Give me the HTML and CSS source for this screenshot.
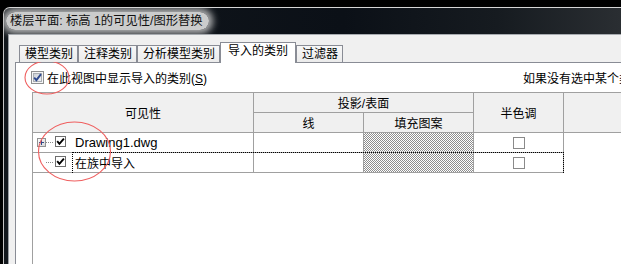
FILE: index.html
```html
<!DOCTYPE html>
<html lang="zh">
<head>
<meta charset="utf-8">
<title>可见性/图形替换</title>
<link rel="stylesheet" href="styles.css">
</head>
<body>
<div class="window">
  <div class="titlebar"><span class="title">楼层平面: 标高 1的可见性/图形替换</span></div>
  <div class="client">
    <div class="tabs">
      <div class="tab">模型类别</div>
      <div class="tab">注释类别</div>
      <div class="tab">分析模型类别</div>
      <div class="tab active">导入的类别</div>
      <div class="tab">过滤器</div>
    </div>
    <div class="page">
      <div class="checkrow">
        <svg class="cb13" width="13" height="13" viewBox="0 0 13 13">
          <defs><linearGradient id="cbg" x1="0" y1="0" x2="1" y2="1"><stop offset="0" stop-color="#cbcfd5"/><stop offset="1" stop-color="#f1f3f5"/></linearGradient></defs>
          <rect x="0.5" y="0.5" width="12" height="12" fill="#f5f5f5" stroke="#8e8f8f"/>
          <rect x="2.5" y="2.5" width="8" height="8" fill="url(#cbg)" stroke="#a9adb3"/>
          <path d="M3.2 6.6 L5.4 9.2 L10 3.2" fill="none" stroke="#2f4a8f" stroke-width="1.9"/>
        </svg>
        <span class="label">在此视图中显示导入的类别(<u>S</u>)</span>
        <span class="hint">如果没有选中某个类别，则该类别将不可见。</span>
      </div>
      <div class="grid">
        <div class="h vis">可见性</div>
        <div class="h proj">投影/表面</div>
        <div class="h half">半色调</div>
        <div class="h extra"></div>
        <div class="h">线</div>
        <div class="h">填充图案</div>

        <div class="c name">
          <svg class="exp" width="9" height="9" viewBox="0 0 9 9">
            <defs><linearGradient id="eg" x1="0" y1="0" x2="1" y2="1"><stop offset="0" stop-color="#ffffff"/><stop offset="1" stop-color="#d4d4d4"/></linearGradient></defs>
            <rect x="0.5" y="0.5" width="8" height="8" fill="url(#eg)" stroke="#919191"/>
            <path d="M2 4.5 H7 M4.5 2 V7" stroke="#2b4a8a" stroke-width="1"/>
          </svg>
          <span class="tree"></span>
          <svg class="cb11" width="11" height="11" viewBox="0 0 11 11">
            <rect x="0.5" y="0.5" width="10" height="10" fill="#fff" stroke="#6e6e6e"/>
            <path d="M2.2 5.2 L4.4 7.8 L8.9 2.6" fill="none" stroke="#000" stroke-width="1.9"/>
          </svg>
          <span class="text latin">Drawing1.dwg</span>
        </div>
        <div class="c"></div>
        <div class="c pat"></div>
        <div class="c chk"><span class="box"></span></div>
        <div class="c blank"></div>

        <div class="c name">
          <span class="exp-space"></span>
          <span class="tree"></span>
          <svg class="cb11" width="11" height="11" viewBox="0 0 11 11">
            <rect x="0.5" y="0.5" width="10" height="10" fill="#fff" stroke="#6e6e6e"/>
            <path d="M2.2 5.2 L4.4 7.8 L8.9 2.6" fill="none" stroke="#000" stroke-width="1.9"/>
          </svg>
          <span class="text">在族中导入</span>
        </div>
        <div class="c"></div>
        <div class="c pat"></div>
        <div class="c chk"><span class="box"></span></div>
        <div class="c blank"></div>

        <div class="focus"></div>
      </div>
    </div>
  </div>
</div>
<svg class="marks" width="621" height="264" viewBox="0 0 621 264">
  <ellipse cx="47" cy="77.5" rx="22" ry="16.5" fill="none" stroke="#ef5f5f" stroke-width="1.1"/>
  <ellipse cx="74.5" cy="151.5" rx="36" ry="29.5" fill="none" stroke="#ef5f5f" stroke-width="1.1"/>
</svg>
</body>
</html>
```

FILE: styles.css
```css
* { box-sizing: border-box; }
html, body { margin: 0; padding: 0; }
body {
  width: 621px;
  height: 264px;
  overflow: hidden;
  position: relative;
  background: #000;
  font: 12px "Liberation Sans", "Noto Sans CJK SC", sans-serif;
  color: #000;
}
.window {
  margin: 7px 0 0 3px;
  height: 257px;
  border-top: 1px solid #d6d6d6;
  border-left: 1px solid #c4c4c4;
  border-top-left-radius: 7px;
  background: linear-gradient(to right, #12171c, #0b1017 55%, #161b20 80%, #2a2e32);
  display: flex;
  flex-direction: column;
  overflow: hidden;
}
.titlebar {
  height: 26px;
  flex: none;
  display: flex;
  align-items: center;
  padding-left: 6px;
}
.title {
  margin-left: -4px;
  padding: 2px 6px 2px 4px;
  line-height: 14px;
  font-size: 12.3px;
  white-space: nowrap;
  color: #111;
  background: rgba(214,214,214,0.95);
  border-radius: 10px;
  box-shadow: 0 0 7px 4px rgba(205,205,205,0.85);
}
.client {
  flex: 1;
  margin-left: 4px;
  border-top: 1px solid #a7abb0;
  border-left: 1px solid #9a9ea3;
  background: #f0f0f0;
  padding: 7px 0 0 6px;
  overflow: hidden;
  position: relative;
}
.tabs {
  display: flex;
  align-items: flex-end;
  margin-left: 4px;
  position: relative;
  z-index: 1;
}
.tab {
  height: 17px;
  padding: 0 4px 0 5px;
  border: 1px solid #898c95;
  border-bottom: none;
  background: linear-gradient(#f7f7f7, #ebebeb);
  line-height: 16px;
  white-space: nowrap;
}
.tab.active {
  height: 21px;
  padding: 0 7px;
  margin-bottom: -1px;
  background: #fff;
  line-height: 17px;
}
.page {
  width: 640px;
  height: 230px;
  border: 1px solid #898c95;
  background: #fff;
}
.checkrow {
  height: 29px;
  display: flex;
  align-items: center;
  padding-left: 15px;
  white-space: nowrap;
}
.cb13 { flex: none; display: block; }
.label { margin-left: 3px; width: 476px; flex: none; }
.hint { flex: none; }
.grid {
  position: relative;
  margin-left: 16px;
  display: grid;
  grid-template-columns: 221px 110px 110px 90px 1fr;
  grid-template-rows: repeat(4, 20px);
  align-content: start;
  height: 200px;
  border-top: 1px solid #a0a0a0;
  border-left: 1px solid #a0a0a0;
}
.h {
  background: #f0f0f0;
  border-right: 1px solid #a0a0a0;
  border-bottom: 1px solid #a0a0a0;
  display: flex;
  align-items: center;
  justify-content: center;
  white-space: nowrap;
}
.vis { grid-row: 1 / 3; grid-column: 1; }
.proj { grid-row: 1; grid-column: 2 / 4; }
.half { grid-row: 1 / 3; grid-column: 4; }
.extra { grid-row: 1 / 3; grid-column: 5; border-right: none; }
.c {
  border-right: 1px solid #a0a0a0;
  border-bottom: 1px solid #a0a0a0;
  display: flex;
  align-items: center;
}
.c.blank { border: none; }
.name { padding-left: 4px; white-space: nowrap; }
.exp { display: block; flex: none; }
.exp-space { width: 9px; flex: none; }
.tree {
  width: 7px;
  height: 1px;
  flex: none;
  border-top: 1px dotted #8a8a8a;
  margin-right: 2px;
}
.cb11 { display: block; flex: none; margin-bottom: 3px; }
.text { margin-left: 9px; }
.text.latin { font-size: 13px; }
.pat {
  background: repeating-conic-gradient(#8e8e8e 0 25%, #ffffff 0 50%) 0 0 / 2px 2px;
}
.chk { justify-content: center; }
.box {
  width: 12px;
  height: 12px;
  border: 1px solid #8a8a8a;
  background: #fff;
}
.focus {
  position: absolute;
  left: 39px;
  top: 59px;
  width: 492px;
  height: 21px;
  border: 1px dotted #000;
  border-bottom: none;
  pointer-events: none;
}
.marks {
  position: absolute;
  left: 0;
  top: 0;
  pointer-events: none;
}
```
